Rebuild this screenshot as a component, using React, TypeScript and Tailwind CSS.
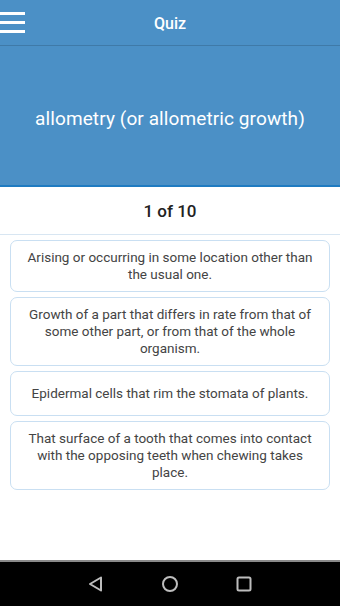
import React from "react";

const answers = [
  "Arising or occurring in some location other than the usual one.",
  "Growth of a part that differs in rate from that of some other part, or from that of the whole organism.",
  "Epidermal cells that rim the stomata of plants.",
  "That surface of a tooth that comes into contact with the opposing teeth when chewing takes place.",
];

export default function App() {
  return (
    <div
      className="w-[340px] h-[606px] flex flex-col bg-white overflow-hidden"
      style={{ fontFamily: "Roboto, 'Liberation Sans', sans-serif" }}
    >
      {/* Toolbar */}
      <div className="relative h-[46px] shrink-0 bg-[#4b90c6] border-b border-[#3f7aa8] flex items-center justify-center">
        <div className="absolute left-0 top-[12px] flex flex-col gap-[6px]">
          <span className="block w-[25px] h-[3px] bg-white" />
          <span className="block w-[25px] h-[3px] bg-white" />
          <span className="block w-[25px] h-[3px] bg-white" />
        </div>
        <span className="text-white text-[16px] font-medium pt-[2px]">Quiz</span>
      </div>

      {/* Term panel */}
      <div className="h-[141px] shrink-0 bg-[#4b90c6] border-b-2 border-[#1f7bc1] flex items-center justify-center pt-[8px]">
        <span className="text-white text-[19px] tracking-[0.1px]">allometry (or allometric growth)</span>
      </div>

      {/* Counter */}
      <div className="h-[48px] shrink-0 border-b border-[#d8e6f2] flex items-center justify-center pt-[3px]">
        <span className="text-[#222] text-[17px] font-medium">1 of 10</span>
      </div>

      {/* Answers */}
      <div className="flex flex-col gap-[5px] px-[10px] pt-[5px] flex-1">
        {answers.map((a) => (
          <div
            key={a}
            className="min-h-[45px] flex items-center justify-center border border-[#c9dff2] rounded-[7px] px-[10px] py-[8px] text-center text-[13.5px] leading-[17px] text-[#444]"
          >
            {a}
          </div>
        ))}
      </div>

      {/* Navigation bar */}
      <div className="h-[46px] shrink-0 bg-black border-t-2 border-[#8a8a8a] flex items-center justify-center gap-[56px]">
        <svg width="18" height="18" viewBox="0 0 18 18" fill="none">
          <path d="M14 2.5 L3 9 L14 15.5 Z" stroke="#bdbdbd" strokeWidth="2" strokeLinejoin="round" />
        </svg>
        <svg width="18" height="18" viewBox="0 0 18 18" fill="none">
          <circle cx="9" cy="9" r="7" stroke="#bdbdbd" strokeWidth="2" />
        </svg>
        <svg width="18" height="18" viewBox="0 0 18 18" fill="none">
          <rect x="2.5" y="2.5" width="13" height="13" rx="1.5" stroke="#bdbdbd" strokeWidth="2" />
        </svg>
      </div>
    </div>
  );
}
